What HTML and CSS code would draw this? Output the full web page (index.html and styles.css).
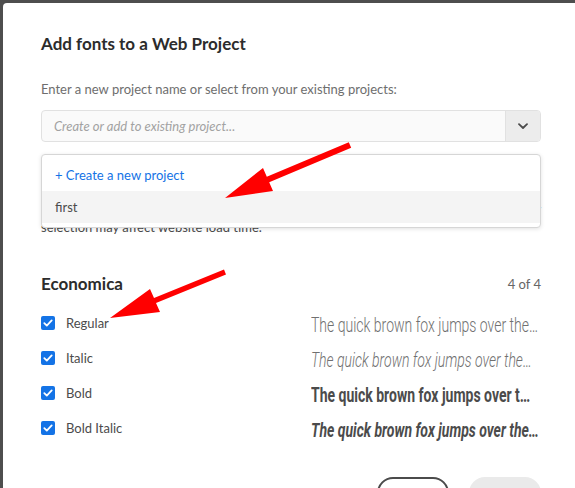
FILE: index.html
```html
<!DOCTYPE html>
<html lang="en">
<head>
<meta charset="utf-8">
<title>Add fonts to a Web Project</title>
<link rel="stylesheet" href="styles.css">
</head>
<body>
<div class="modal">
  <h1 class="title">Add fonts to a Web Project</h1>
  <p class="label">Enter a new project name or select from your existing projects:</p>
  <div class="combo">
    <div class="combo-input">Create or add to existing project...</div>
    <div class="combo-btn">
      <svg width="10" height="7" viewBox="0 0 10 7"><path d="M1 1.2 L5 5 L9 1.2" fill="none" stroke="#4b4b4b" stroke-width="1.8" stroke-linecap="round" stroke-linejoin="round"/></svg>
    </div>
    <ul class="menu">
      <li class="menu-item create">+ Create a new project</li>
      <li class="menu-item active">first</li>
    </ul>
  </div>
  <p class="note">Choose the styles you want to include in your web project. Including many styles in your<br>selection may affect website load time.</p>

  <div class="family-head">
    <h2 class="family">Economica</h2>
    <span class="count">4 of 4</span>
  </div>

  <ul class="styles">
    <li class="style-row">
      <span class="check"><svg width="10" height="8" viewBox="0 0 10 8"><path d="M1.3 4.2 L3.8 6.6 L8.7 1.4" fill="none" stroke="#fff" stroke-width="1.8" stroke-linecap="round" stroke-linejoin="round"/></svg></span>
      <span class="style-name">Regular</span>
      <span class="sample"><span class="sample-text s-regular">The quick brown fox jumps over the…</span></span>
    </li>
    <li class="style-row">
      <span class="check"><svg width="10" height="8" viewBox="0 0 10 8"><path d="M1.3 4.2 L3.8 6.6 L8.7 1.4" fill="none" stroke="#fff" stroke-width="1.8" stroke-linecap="round" stroke-linejoin="round"/></svg></span>
      <span class="style-name">Italic</span>
      <span class="sample"><span class="sample-text s-italic">The quick brown fox jumps over the…</span></span>
    </li>
    <li class="style-row">
      <span class="check"><svg width="10" height="8" viewBox="0 0 10 8"><path d="M1.3 4.2 L3.8 6.6 L8.7 1.4" fill="none" stroke="#fff" stroke-width="1.8" stroke-linecap="round" stroke-linejoin="round"/></svg></span>
      <span class="style-name">Bold</span>
      <span class="sample"><span class="sample-text s-bold">The quick brown fox jumps over t…</span></span>
    </li>
    <li class="style-row">
      <span class="check"><svg width="10" height="8" viewBox="0 0 10 8"><path d="M1.3 4.2 L3.8 6.6 L8.7 1.4" fill="none" stroke="#fff" stroke-width="1.8" stroke-linecap="round" stroke-linejoin="round"/></svg></span>
      <span class="style-name">Bold Italic</span>
      <span class="sample"><span class="sample-text s-bolditalic">The quick brown fox jumps over the…</span></span>
    </li>
  </ul>

  <div class="actions">
    <button class="btn btn-outline">Cancel</button>
    <button class="btn btn-disabled">Save</button>
  </div>
</div>

<svg class="annotations" width="575" height="488" viewBox="0 0 575 488">
  <polygon fill="#ff0000" points="348.8,142.2 266.8,176.7 263,168 225,198 273,191 269.2,182.3 351.2,147.8"/>
  <polygon fill="#ff0000" points="224,269.4 154,297.9 150,289 110,318 160,312 156,303.1 226,274.6"/>
</svg>
</body>
</html>
```

FILE: styles.css
```css
html, body {
  margin: 0;
  padding: 0;
}
body {
  width: 575px;
  height: 488px;
  overflow: hidden;
  background: #4e4e4e;
  font-family: Lato, "Open Sans", sans-serif;
  color: #4b4b4b;
  position: relative;
}
.modal {
  margin: 3px 0 0 3px;
  width: 572px;
  height: 485px;
  overflow: hidden;
  box-sizing: border-box;
  padding: 29px 0 0 38px;
  background: #fff;
  border-top-left-radius: 4px;
}
.title {
  margin: 0;
  font-size: 17px;
  line-height: 24px;
  font-weight: 700;
  color: #2c2c2c;
}
.label {
  margin: 24px 0 12px;
  font-size: 13px;
  line-height: 18px;
  color: #6e6e6e;
}
.combo {
  position: relative;
  width: 500px;
  height: 32px;
  display: flex;
  box-sizing: border-box;
  border: 1px solid #e1e1e1;
  border-radius: 4px;
  background: #fafafa;
}
.combo-input {
  flex: 1;
  display: flex;
  align-items: center;
  padding-left: 12px;
  font-size: 13px;
  font-style: italic;
  color: #a2a2a2;
}
.combo-btn {
  width: 34px;
  display: flex;
  align-items: center;
  justify-content: center;
  background: #ececec;
  border-left: 1px solid #e1e1e1;
  border-radius: 0 3px 3px 0;
}
.menu {
  position: absolute;
  top: 43px;
  left: -1px;
  width: 500px;
  box-sizing: border-box;
  margin: 0;
  padding: 4px 0;
  list-style: none;
  background: #fff;
  border: 1px solid #d6d6d6;
  border-radius: 4px;
  box-shadow: 0 1px 4px rgba(0, 0, 0, 0.12);
  z-index: 2;
}
.menu-item {
  height: 32px;
  display: flex;
  align-items: center;
  padding-left: 13px;
  font-size: 13px;
}
.menu-item.create {
  color: #1473e6;
}
.menu-item.active {
  background: #f4f4f4;
  color: #4b4b4b;
}
.note {
  margin: 58px 0 0;
  font-size: 13px;
  line-height: 18px;
  color: #4b4b4b;
}
.family-head {
  width: 500px;
  margin-top: 36px;
  display: flex;
  justify-content: space-between;
  align-items: center;
}
.family {
  margin: 0;
  font-size: 17px;
  line-height: 24px;
  font-weight: 700;
  color: #2c2c2c;
}
.count {
  font-size: 13px;
  color: #666666;
}
.styles {
  list-style: none;
  margin: 9px 0 0;
  padding: 0;
  width: 500px;
}
.style-row {
  height: 35px;
  display: flex;
  align-items: center;
}
.check {
  width: 14px;
  height: 14px;
  border-radius: 2px;
  background: #1473e6;
  display: flex;
  align-items: center;
  justify-content: center;
  flex: none;
}
.style-name {
  margin-left: 11px;
  font-size: 13px;
  color: #4b4b4b;
  flex: 1;
}
.sample {
  width: 230px;
  height: 26px;
  margin-top: 4px;
  overflow: hidden;
  flex: none;
}
.sample-text {
  display: block;
  width: 330px;
  font-family: Roboto, "Liberation Sans", sans-serif;
  font-size: 20px;
  line-height: 26px;
  white-space: nowrap;
  transform: scaleX(0.7);
  transform-origin: left center;
}
.s-regular {
  font-weight: 300;
  color: #707070;
}
.s-italic {
  font-weight: 300;
  font-style: italic;
  color: #707070;
}
.s-bold {
  font-weight: 700;
  color: #4b4b4b;
}
.s-bolditalic {
  font-weight: 700;
  font-style: italic;
  color: #4b4b4b;
}
.actions {
  width: 500px;
  margin-top: 32px;
  display: flex;
  justify-content: flex-end;
  gap: 20px;
}
.btn {
  width: 72px;
  height: 32px;
  border-radius: 16px;
  box-sizing: border-box;
  font-family: Lato, sans-serif;
  font-size: 14px;
  font-weight: 700;
  padding: 0;
}
.btn-outline {
  background: #fff;
  border: 2px solid #4b4b4b;
  color: #4b4b4b;
}
.btn-disabled {
  background: #eaeaea;
  border: 2px solid #eaeaea;
  color: #c4c4c4;
}
.annotations {
  position: absolute;
  left: 0;
  top: 0;
  pointer-events: none;
  z-index: 5;
}
```
